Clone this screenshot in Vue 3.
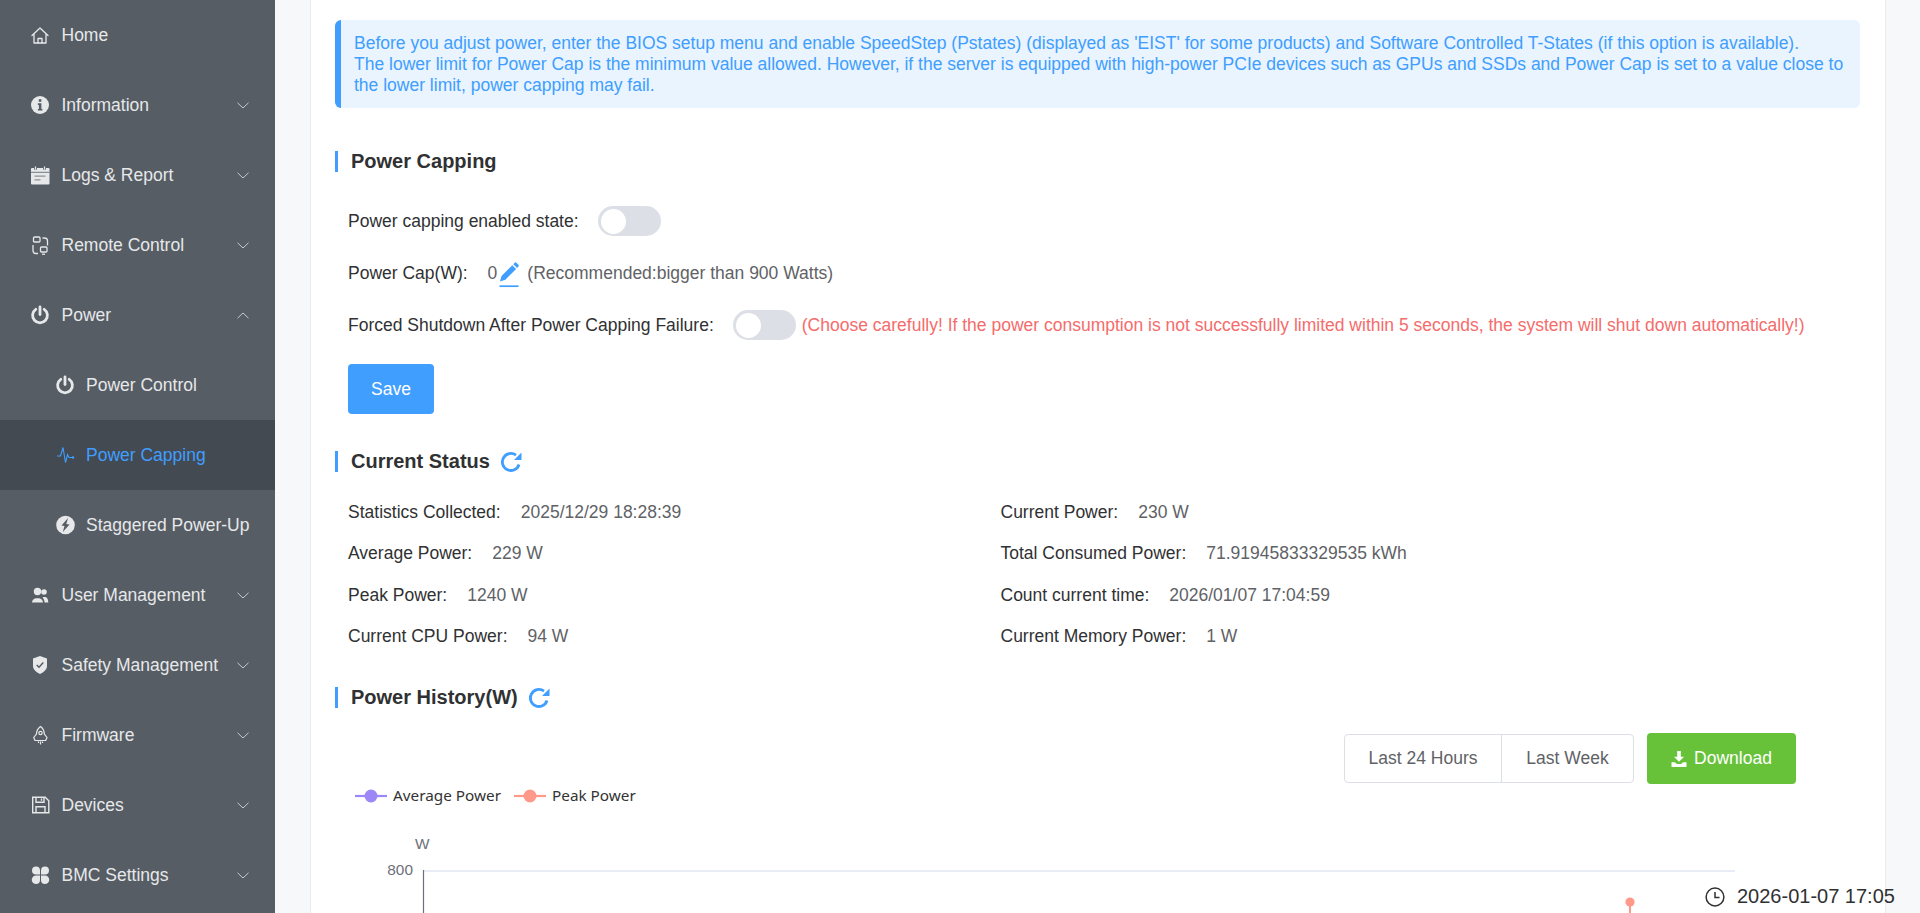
<script setup>
const stats = [
  ['Statistics Collected:', '2025/12/29 18:28:39'],
  ['Current Power:', '230 W'],
  ['Average Power:', '229 W'],
  ['Total Consumed Power:', '71.91945833329535 kWh'],
  ['Peak Power:', '1240 W'],
  ['Count current time:', '2026/01/07 17:04:59'],
  ['Current CPU Power:', '94 W'],
  ['Current Memory Power:', '1 W']
]
const nav = [
  { t: 'Home', i: 'home', chev: '' },
  { t: 'Information', i: 'info', chev: 'd' },
  { t: 'Logs & Report', i: 'logs', chev: 'd' },
  { t: 'Remote Control', i: 'remote', chev: 'd' },
  { t: 'Power', i: 'power', chev: 'u' },
  { t: 'Power Control', i: 'power', sub: true },
  { t: 'Power Capping', i: 'pulse', sub: true, active: true },
  { t: 'Staggered Power-Up', i: 'bolt', sub: true },
  { t: 'User Management', i: 'users', chev: 'd' },
  { t: 'Safety Management', i: 'shield', chev: 'd' },
  { t: 'Firmware', i: 'rocket', chev: 'd' },
  { t: 'Devices', i: 'save', chev: 'd' },
  { t: 'BMC Settings', i: 'apps', chev: 'd' }
]
</script>

<template>
  <div class="page">
    <aside class="side">
      <div v-for="n in nav" :key="n.t" class="item" :class="{ sub: n.sub, active: n.active }">
        <svg class="ico" viewBox="0 0 20 20">
          <g v-if="n.i === 'home'" fill="none" stroke="currentColor" stroke-width="1.3" stroke-linejoin="round" stroke-linecap="round">
            <path d="M2 10.500 10 3l8 7.500M4 9v9h12V9"/><path d="M8 18v-4.500h4V18"/>
          </g>
          <g v-else-if="n.i === 'info'">
            <circle cx="10" cy="10" r="9" fill="currentColor"/>
            <path d="M8.800 4.300h2.600v2.500H8.800zM7.900 8.300h3.500v5.600h1v1.700H7.900v-1.700h1v-3.900h-1z" fill="#565d64"/>
          </g>
          <g v-else-if="n.i === 'logs'">
            <path d="M2 3h16.500a1 1 0 0 1 1 1v14.500a1 1 0 0 1-1 1H2a1 1 0 0 1-1-1V4a1 1 0 0 1 1-1z" fill="currentColor"/>
            <path d="M5.500 1.500v3M14.500 1.500v3" stroke="#565d64" stroke-width="3"/>
            <path d="M5.500 1.500v2.800M14.500 1.500v2.800" stroke="currentColor" stroke-width="1.300"/>
            <path d="M1 7.300h18.500" stroke="#565d64" stroke-width=".8"/>
            <path d="M4.500 11.200h11M4.500 14.800h6" stroke="#8d9297" stroke-width="1.300"/>
          </g>
          <g v-else-if="n.i === 'remote'" fill="none" stroke="currentColor" stroke-width="1.300">
            <rect x="3.500" y="2" width="6.500" height="5" rx="1"/>
            <rect x="10.500" y="12" width="6.500" height="5" rx="1"/>
            <path d="M3.500 7v-.500M12.500 3h2a3 3 0 0 1 3 3v4.500"/>
            <path d="M8 18.500H6a3 3 0 0 1-3-3V10"/>
            <path d="M12 19.200h3"/>
          </g>
          <g v-else-if="n.i === 'power'" fill="none" stroke="currentColor" stroke-width="2.800" stroke-linecap="round">
            <path d="M5.800 4.300a7.400 7.400 0 1 0 8.400 0"/><path d="M10 2v7.500"/>
          </g>
          <g v-else-if="n.i === 'pulse'" fill="none" stroke="currentColor" stroke-width="1.100">
            <path d="M2 11h3.500L8 2.500l2.500 15 2-8 1.500 3h3.500"/><circle cx="18" cy="12.500" r="1.300" fill="currentColor" stroke="none"/>
          </g>
          <g v-else-if="n.i === 'bolt'">
            <circle cx="10.500" cy="10" r="9.300" fill="currentColor"/>
            <path d="M13 3 6.500 10.500 9.500 11 7.800 17l6.700-7.500-3.200-.5z" fill="#565d64"/>
          </g>
          <g v-else-if="n.i === 'users'" fill="currentColor">
            <circle cx="7.500" cy="6.500" r="3.700"/><path d="M2 17.500c0-1 .5-2.500 2-3.500l1.500-.8h4l1.500.8c1.500 1 2 2.500 2 3.500z"/>
            <circle cx="14" cy="7" r="2.800"/><path d="M14.500 17.500c0-2-.8-4-2-5l1-.4h2l1 .4c1 .8 1.800 2.500 1.800 5z"/>
          </g>
          <g v-else-if="n.i === 'shield'">
            <path d="M10 1 17 3.500v7.500c0 3.500-3 6-7 8-4-2-7-4.500-7-8V3.500z" fill="currentColor"/>
            <path d="m6.700 10 2.300 2.300 4.300-4.800" fill="none" stroke="#565d64" stroke-width="1.400"/>
          </g>
          <g v-else-if="n.i === 'rocket'" fill="none" stroke="currentColor" stroke-width="1.200">
            <path d="M10.500 1.500c2.700 2 3.800 4.500 3.800 7.500l2.700 3.500-1.300 3H5l-1.300-3L6.500 9c0-3 1.300-5.500 4-7.500z"/>
            <circle cx="10.500" cy="8" r="1.700"/><path d="M8.500 16.500v1.500M10.500 16.500v3M12.500 16.500v1.500"/>
          </g>
          <g v-else-if="n.i === 'save'" fill="none" stroke="currentColor" stroke-width="1.400">
            <path d="M2.700 2.200h12.500l3.600 3.600v12H2.700z"/><path d="M6 2.200v5h8v-5M11.500 3.500v2.200M6 17.800v-6h9v6"/>
          </g>
          <g v-else-if="n.i === 'apps'" fill="currentColor">
            <path d="M6 1.500a4 4 0 0 1 4 4V9.500H6a4 4 0 0 1 0-8zM15 1.500a4 4 0 0 0-4 4V9.500h4a4 4 0 0 0 0-8zM6 19a4 4 0 0 0 4-4V10.500H6a4 4 0 0 0 0 8.500zM15 19a4 4 0 0 1-4-4V10.500h4a4 4 0 0 1 0 8.500z"/>
          </g>
        </svg>
        <span class="label">{{ n.t }}</span>
        <svg v-if="n.chev" class="chev" viewBox="0 0 12 7" :class="{ up: n.chev === 'u' }">
          <path d="M.5.800 6 6 11.500.800" fill="none" stroke="currentColor" stroke-width="1"/>
        </svg>
      </div>
    </aside>

    <main class="main">
      <section class="card">
        <div class="alert">
          Before you adjust power, enter the BIOS setup menu and enable SpeedStep (Pstates) (displayed as 'EIST' for some products) and Software Controlled T-States (if this option is available).<br>
          The lower limit for Power Cap is the minimum value allowed. However, if the server is equipped with high-power PCIe devices such as GPUs and SSDs and Power Cap is set to a value close to the lower limit, power capping may fail.
        </div>

        <h2 class="head first">Power Capping</h2>
        <div class="row r1">
          <span class="lab">Power capping enabled state:</span>
          <span class="switch"><i></i></span>
        </div>
        <div class="row r2">
          <span class="lab">Power Cap(W):</span>
          <span class="val zero">0</span>
          <svg class="pen" viewBox="0 0 20 26">
            <path d="M1 19.500 2.500 14 13.300 3.200l3.800 3.800L6.300 17.800zM14.300 2.200 15.700.8a1.200 1.200 0 0 1 1.700 0l2 2a1.200 1.200 0 0 1 0 1.700L18.100 6z" fill="#409eff"/>
            <path d="M.5 24.200h19" stroke="#409eff" stroke-width="1.700"/>
          </svg>
          <span class="val">(Recommended:bigger than 900 Watts)</span>
        </div>
        <div class="row r3">
          <span class="lab">Forced Shutdown After Power Capping Failure:</span>
          <span class="switch"><i></i></span>
          <span class="warn">(Choose carefully! If the power consumption is not successfully limited within 5 seconds, the system will shut down automatically!)</span>
        </div>
        <button class="save">Save</button>

        <h2 class="head status">Current Status
          <svg class="refresh" viewBox="0 0 22 22"><path d="M19 13.500A8.500 8.500 0 1 1 16 4.200" fill="none" stroke="#409eff" stroke-width="2.800"/><path d="M21.500 1.500V9H14z" fill="#409eff"/></svg>
        </h2>
        <div class="stats">
          <div v-for="s in stats" :key="s[0]" class="stat">
            <span class="lab">{{ s[0] }}</span><span class="val">{{ s[1] }}</span>
          </div>
        </div>

        <h2 class="head hist">Power History(W)
          <svg class="refresh" viewBox="0 0 22 22"><path d="M19 13.500A8.500 8.500 0 1 1 16 4.200" fill="none" stroke="#409eff" stroke-width="2.800"/><path d="M21.500 1.500V9H14z" fill="#409eff"/></svg>
        </h2>
        <div class="tools">
          <div class="group"><span>Last 24 Hours</span><span>Last Week</span></div>
          <button class="dl">
            <svg viewBox="0 0 16 16" width="16" height="16"><path d="M6.200 0h3.600v5.800H13L8 10.800 3 5.800h3.200zM.5 11.200h3.300l2.200 1.800h4l2.200-1.800h3.300v4.300a.5.5 0 0 1-.5.500H1a.5.5 0 0 1-.5-.5z" fill="#fff"/></svg>
            Download
          </button>
        </div>

        <svg class="chart" width="1575" height="139" viewBox="310 774 1575 139">
          <path d="M355 796h32" stroke="#9d87f6" stroke-width="2.200"/>
          <circle cx="371" cy="796" r="6.500" fill="#9d87f6"/>
          <text x="393" y="801" class="lg">Average Power</text>
          <path d="M514 796h32" stroke="#ff9a8a" stroke-width="2.200"/>
          <circle cx="530" cy="796" r="6.500" fill="#ff9a8a"/>
          <text x="552" y="801" class="lg">Peak Power</text>
          <text x="415" y="849" class="ax">W</text>
          <text x="413" y="875" class="ax" text-anchor="end">800</text>
          <path d="M424 871h1311" stroke="#e0e6f1" stroke-width="1.500"/>
          <path d="M423.500 870v43" stroke="#6e7079" stroke-width="1.200"/>
          <path d="M1630 902v11" stroke="#ff9a8a" stroke-width="2"/>
          <circle cx="1630" cy="902" r="4.600" fill="#ff9a8a"/>
        </svg>
      </section>
    </main>

    <div class="clock">
      <svg viewBox="0 0 20 20" width="20" height="20"><circle cx="10" cy="10" r="8.900" fill="none" stroke="#303133" stroke-width="1.500"/><path d="M10 5v5.500h4.500" fill="none" stroke="#303133" stroke-width="1.500"/></svg>
      <span>2026-01-07 17:05</span>
    </div>
  </div>
</template>

<style>
html, body { margin: 0; overflow: hidden; }
</style>

<style scoped>
.page {
  position: relative;
  display: flex;
  width: 1920px;
  height: 913px;
  overflow: hidden;
  background: #f7f8f9;
  font-family: "Liberation Sans", Arial, sans-serif;
  font-size: 17.5px;
  color: #303133;
}
.side { width: 275px; flex: none; background: #565d64; color: #e6e8ea; }
.item { position: relative; display: flex; align-items: center; height: 70px; padding-left: 30px; box-sizing: border-box; }
.item.sub { padding-left: 55px; }
.item.active { background: #434a52; color: #409eff; }
.ico { width: 20px; height: 20px; flex: none; margin-right: 11.500px; }
.sub .ico { margin-right: 11px; }
.label { white-space: nowrap; }
.chev { position: absolute; left: 237px; top: 32px; width: 12px; height: 7px; color: #c6cace; }
.chev.up { transform: rotate(180deg); }
.main { flex: 1; min-width: 0; padding-left: 35px; padding-right: 34px; }
.card {
  height: 913px;
  box-sizing: border-box;
  background: #fff;
  border: 1px solid #e9ebef;
  border-width: 0 1px;
  padding: 20px 25px 0 24px;
}
.alert {
  height: 88px;
  box-sizing: border-box;
  padding: 13px 13px 0;
  background: #e9f4fe;
  border-left: 6px solid #409eff;
  border-radius: 6px;
  color: #409eff;
  line-height: 21px;
}
.head {
  display: flex;
  align-items: center;
  margin: 0;
  height: 21px;
  padding-left: 13px;
  border-left: 3px solid #409eff;
  font-size: 20px;
  font-weight: 700;
  color: #303133;
}
.first { margin-top: 43px; }
.row { display: flex; align-items: center; padding-left: 13px; height: 30px; white-space: nowrap; }
.r1 { margin-top: 34px; }
.r2 { margin-top: 22px; }
.r3 { margin-top: 22px; }
.val { color: #606266; }
.r1 .switch { margin-left: 19px; }
.r2 .lab { margin-right: 20px; }
.pen { width: 20px; height: 26px; margin: 4px 8px 0 2px; }
.r3 .switch { margin-left: 19px; }
.warn { margin-left: 6px; color: #f56c6c; }
.switch {
  position: relative;
  display: inline-block;
  width: 63px;
  height: 30px;
  border-radius: 15px;
  background: #dcdfe6;
}
.switch i { position: absolute; left: 3px; top: 2.500px; width: 25px; height: 25px; border-radius: 50%; background: #fff; }
.save {
  display: block;
  width: 86px;
  height: 50px;
  margin: 24px 0 0 13px;
  padding: 1px 0 0;
  border: 0;
  border-radius: 4px;
  background: #409eff;
  color: #fff;
  font: inherit;
}
.status { margin-top: 37px; }
.refresh { width: 22px; height: 22px; margin-left: 10px; }
.stats { display: grid; grid-template-columns: 652.500px 1fr; grid-auto-rows: 41.250px; margin-top: 20px; padding-left: 13px; }
.stat { display: flex; align-items: center; }
.stat .lab { margin-right: 20px; }
.hist { margin-top: 30px; }
.tools { display: flex; justify-content: flex-end; align-items: center; gap: 13px; margin-top: 25px; padding-right: 64px; height: 51px; }
.group { display: flex; height: 49px; box-sizing: border-box; border: 1px solid #dcdfe6; border-radius: 4px; color: #606266; }
.group span { display: flex; align-items: center; justify-content: center; }
.group span:first-child { width: 156px; border-right: 1px solid #dcdfe6; }
.group span:last-child { width: 131px; }
.dl {
  display: flex;
  align-items: center;
  justify-content: center;
  gap: 7px;
  width: 149px;
  height: 51px;
  border: 0;
  border-radius: 4px;
  background: #67c23a;
  color: #fff;
  font: inherit;
}
.chart { display: block; margin: -10px -25px 0 -25px; }
.lg { font-family: "Noto Sans", sans-serif; font-size: 15.300px; fill: #333; }
.ax { font-family: "Liberation Sans", sans-serif; font-size: 15.400px; fill: #6e7079; }
.clock { position: absolute; left: 1705px; top: 885px; display: flex; align-items: center; gap: 12px; font-size: 20px; color: #303133; white-space: nowrap; }
</style>
